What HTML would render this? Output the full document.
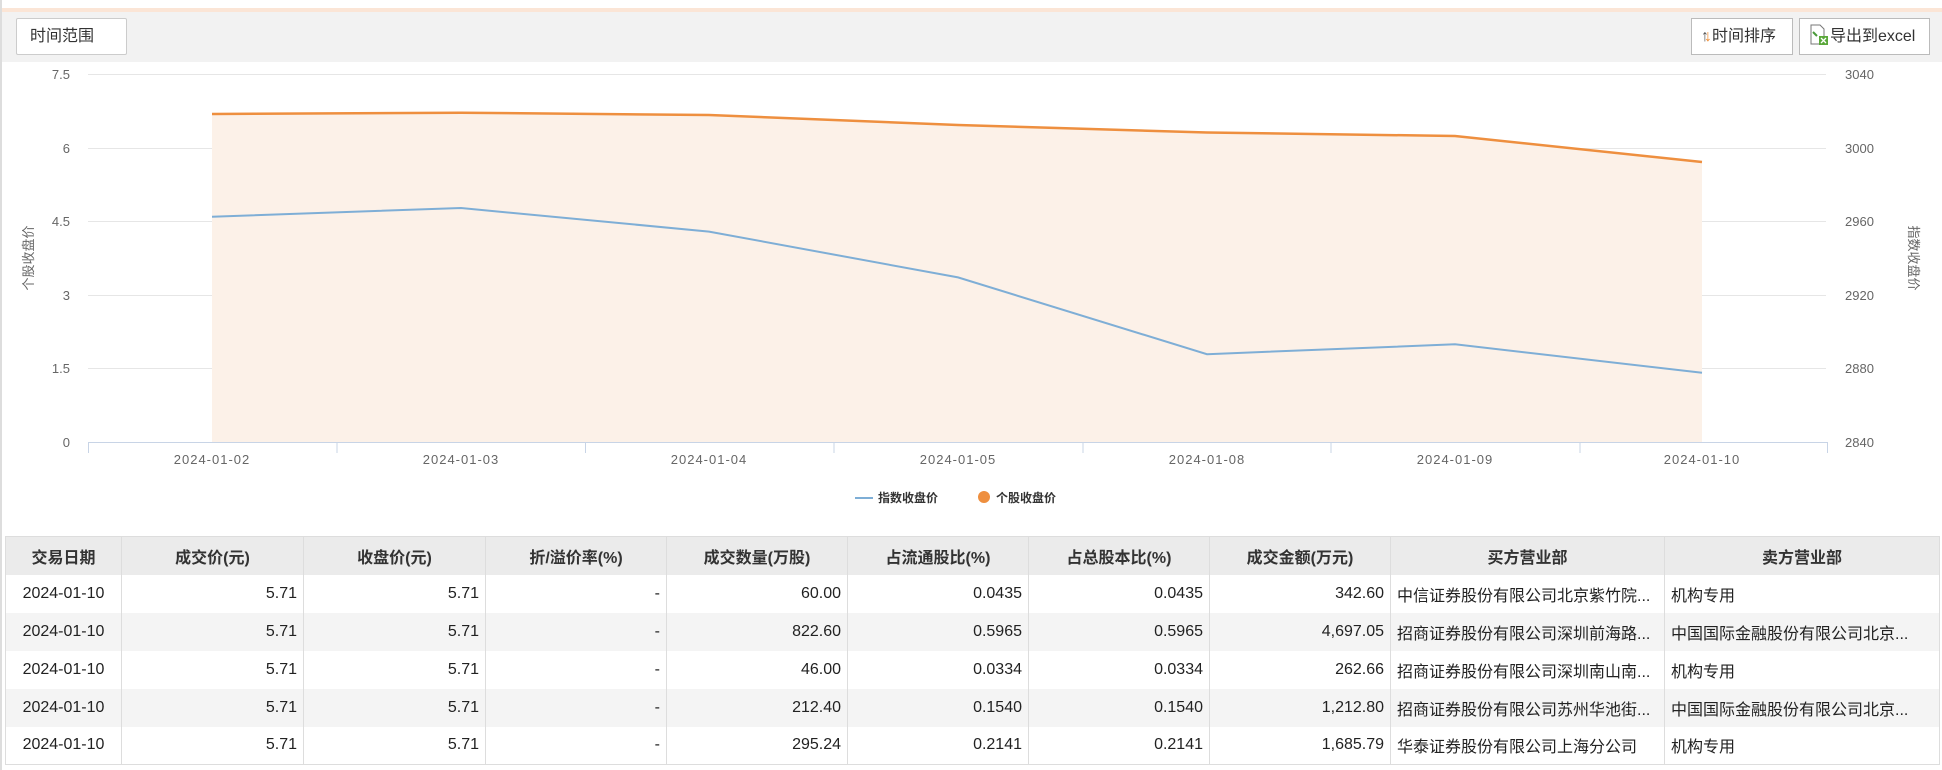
<!DOCTYPE html>
<html><head><meta charset="utf-8"><style>
body{margin:0;width:1942px;height:770px;background:#fff;position:relative;overflow:hidden;font-family:"Liberation Sans","Noto Sans CJK SC",sans-serif;}
.abs{position:absolute}
.btn{position:absolute;background:#fff;border:1px solid #bbb;box-sizing:border-box;font-size:16px;color:#333;line-height:35px}
table{position:absolute;left:5px;top:536px;width:1935px;border-collapse:collapse;font-size:16px;color:#222;table-layout:fixed;border:1px solid #ddd}
td,th{height:38px;padding:0 6px;border-right:1px solid #ddd;white-space:nowrap;overflow:hidden;text-overflow:ellipsis;box-sizing:border-box}
th{background:#ebebeb;font-weight:bold;text-align:center;color:#333}
tr:nth-child(odd) td{background:#f4f4f4}
td.r{text-align:right}
td.c{text-align:center}
</style></head><body>
<div class="abs" style="left:0;top:0;width:2px;height:770px;background:#ddd"></div>
<div class="abs" style="left:2px;top:8px;width:1940px;height:4px;background:#fbe5d6"></div>
<div class="abs" style="left:2px;top:12px;width:1940px;height:50px;background:#f2f2f2"></div>
<div class="btn" style="left:16px;top:18px;width:111px;height:37px;border-color:#ccc;border-radius:2px;padding-left:13px">时间范围</div>
<div class="btn" style="left:1691px;top:18px;width:102px;height:37px;padding-left:9px"><span style="font-size:16px;color:#555">↑</span><span style="font-size:16px;color:#f08a2c;margin-left:-5px">↓</span>时间排序</div>
<div class="btn" style="left:1799px;top:18px;width:131px;height:37px;padding-left:8px">
<svg width="22" height="22" viewBox="0 0 22 22" style="vertical-align:-5px"><path d="M3 1h9l4 4v15H3z" fill="#fff" stroke="#777"/><path d="M5 8l4 4" stroke="#4a9a3a" stroke-width="2"/><rect x="11" y="12" width="9" height="9" fill="#5aa83a"/><path d="M13 14l5 5M18 14l-5 5" stroke="#fff" stroke-width="1.3"/></svg>导出到excel</div>
<svg class="abs" style="left:0;top:0" width="1942" height="530">
<g stroke="#e6e6e6" stroke-width="1">
<line x1="88" x2="1826" y1="74.5" y2="74.5"/><line x1="88" x2="1826" y1="148.5" y2="148.5"/><line x1="88" x2="1826" y1="221.5" y2="221.5"/><line x1="88" x2="1826" y1="295.5" y2="295.5"/><line x1="88" x2="1826" y1="368.5" y2="368.5"/></g>
<path d="M212 114L461 112.7L709 115L958 125L1207 132.5L1455 136L1702 162L1702 442L212 442Z" fill="#fcf1e8"/>
<path d="M212 114L461 112.7L709 115L958 125L1207 132.5L1455 136L1702 162" fill="none" stroke="#ee8f3f" stroke-width="2.5"/>
<path d="M212 216.7L461 208L709 231.6L958 277.4L1207 354.2L1455 344.3L1702 372.8" fill="none" stroke="#7eaed6" stroke-width="2"/>
<g stroke="#c8d4e6"><line x1="88" x2="1828" y1="442.5" y2="442.5"/>
<line x1="88.5" x2="88.5" y1="442" y2="453"/><line x1="337" x2="337" y1="442" y2="453"/><line x1="585.5" x2="585.5" y1="442" y2="453"/><line x1="834" x2="834" y1="442" y2="453"/><line x1="1083" x2="1083" y1="442" y2="453"/><line x1="1331" x2="1331" y1="442" y2="453"/><line x1="1580" x2="1580" y1="442" y2="453"/><line x1="1827.5" x2="1827.5" y1="442" y2="453"/></g>
<g font-size="13" fill="#666" font-family="Liberation Sans,sans-serif" text-anchor="end">
<text x="70" y="79">7.5</text><text x="70" y="153">6</text><text x="70" y="226">4.5</text><text x="70" y="300">3</text><text x="70" y="373">1.5</text><text x="70" y="447">0</text></g>
<g font-size="13" fill="#666" font-family="Liberation Sans,sans-serif">
<text x="1845" y="79">3040</text><text x="1845" y="153">3000</text><text x="1845" y="226">2960</text><text x="1845" y="300">2920</text><text x="1845" y="373">2880</text><text x="1845" y="447">2840</text></g>
<g font-size="13" fill="#666" font-family="Liberation Sans,sans-serif" text-anchor="middle" letter-spacing="1">
<text x="212" y="464">2024-01-02</text><text x="461" y="464">2024-01-03</text><text x="709" y="464">2024-01-04</text><text x="958" y="464">2024-01-05</text><text x="1207" y="464">2024-01-08</text><text x="1455" y="464">2024-01-09</text><text x="1702" y="464">2024-01-10</text></g>
<text transform="translate(33,258) rotate(-90)" font-size="13" fill="#666" text-anchor="middle" font-family="Liberation Sans,Noto Sans CJK SC,sans-serif">个股收盘价</text>
<text transform="translate(1909,258) rotate(90)" font-size="13" fill="#666" text-anchor="middle" font-family="Liberation Sans,Noto Sans CJK SC,sans-serif">指数收盘价</text>
<line x1="855" x2="873" y1="498" y2="498" stroke="#7eaed6" stroke-width="2"/>
<text x="878" y="502" font-size="12" font-weight="bold" fill="#333" font-family="Liberation Sans,Noto Sans CJK SC,sans-serif">指数收盘价</text>
<circle cx="984" cy="497" r="6" fill="#ee8f3f"/>
<text x="996" y="502" font-size="12" font-weight="bold" fill="#333" font-family="Liberation Sans,Noto Sans CJK SC,sans-serif">个股收盘价</text>
</svg>
<table>
<colgroup><col style="width:116px"><col style="width:182px"><col style="width:182px"><col style="width:181px"><col style="width:181px"><col style="width:181px"><col style="width:181px"><col style="width:181px"><col style="width:274px"><col></colgroup>
<tr><th>交易日期</th><th>成交价(元)</th><th>收盘价(元)</th><th>折/溢价率(%)</th><th>成交数量(万股)</th><th>占流通股比(%)</th><th>占总股本比(%)</th><th>成交金额(万元)</th><th>买方营业部</th><th>卖方营业部</th></tr>
<tr><td class="c">2024-01-10</td><td class="r">5.71</td><td class="r">5.71</td><td class="r">-</td><td class="r">60.00</td><td class="r">0.0435</td><td class="r">0.0435</td><td class="r">342.60</td><td>中信证券股份有限公司北京紫竹院...</td><td>机构专用</td></tr>
<tr><td class="c">2024-01-10</td><td class="r">5.71</td><td class="r">5.71</td><td class="r">-</td><td class="r">822.60</td><td class="r">0.5965</td><td class="r">0.5965</td><td class="r">4,697.05</td><td>招商证券股份有限公司深圳前海路...</td><td>中国国际金融股份有限公司北京...</td></tr>
<tr><td class="c">2024-01-10</td><td class="r">5.71</td><td class="r">5.71</td><td class="r">-</td><td class="r">46.00</td><td class="r">0.0334</td><td class="r">0.0334</td><td class="r">262.66</td><td>招商证券股份有限公司深圳南山南...</td><td>机构专用</td></tr>
<tr><td class="c">2024-01-10</td><td class="r">5.71</td><td class="r">5.71</td><td class="r">-</td><td class="r">212.40</td><td class="r">0.1540</td><td class="r">0.1540</td><td class="r">1,212.80</td><td>招商证券股份有限公司苏州华池街...</td><td>中国国际金融股份有限公司北京...</td></tr>
<tr><td class="c">2024-01-10</td><td class="r">5.71</td><td class="r">5.71</td><td class="r">-</td><td class="r">295.24</td><td class="r">0.2141</td><td class="r">0.2141</td><td class="r">1,685.79</td><td>华泰证券股份有限公司上海分公司</td><td>机构专用</td></tr>
</table>
</body></html>
